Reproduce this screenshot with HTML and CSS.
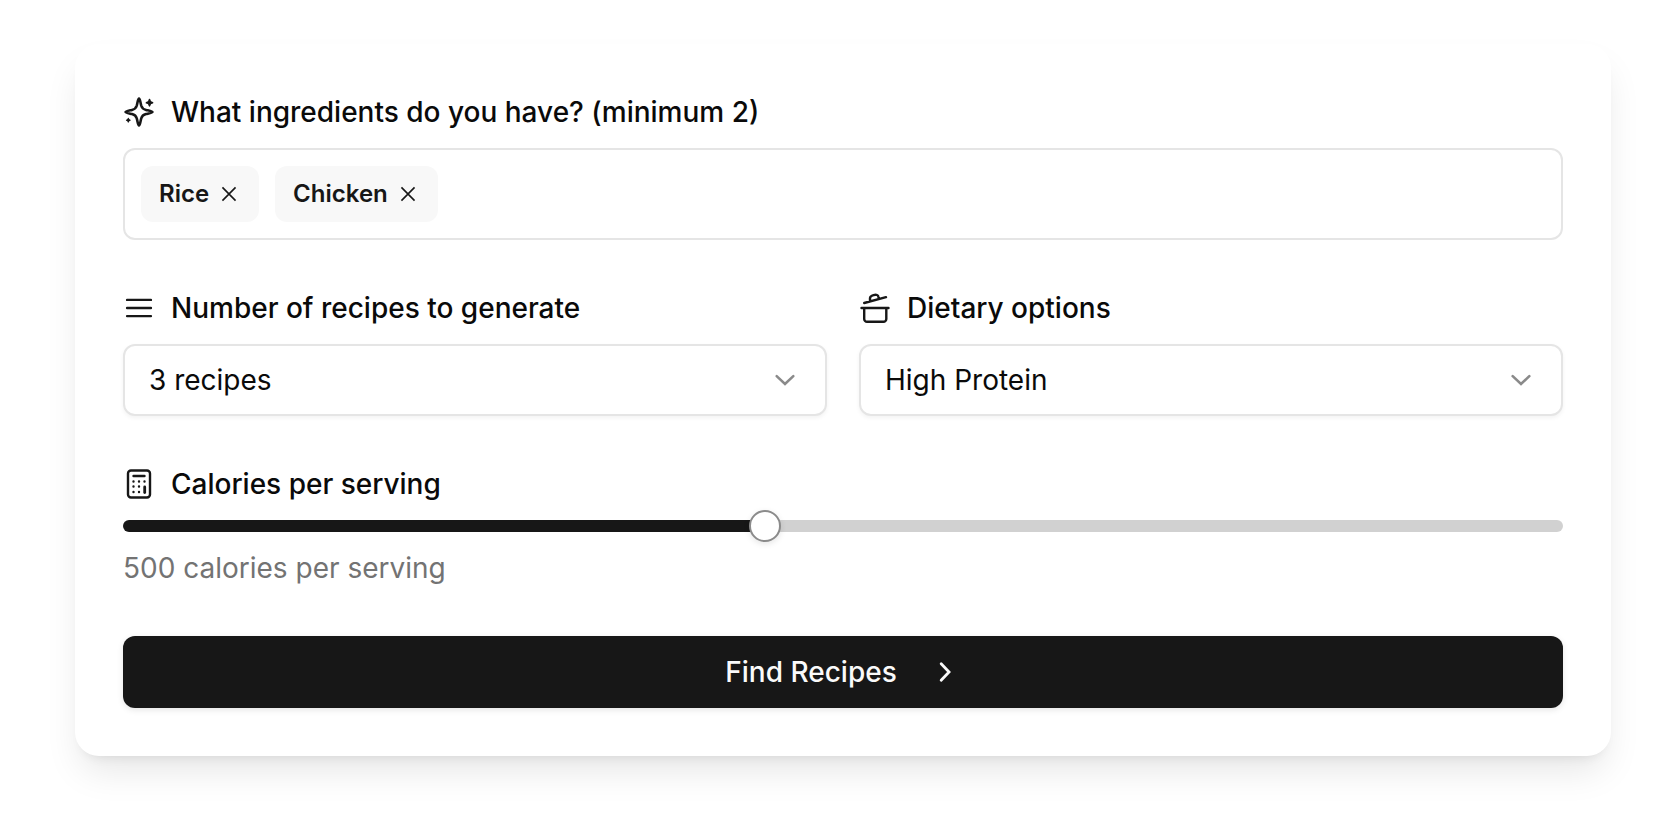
FILE: index.html
```html
<!DOCTYPE html>
<html lang="en">
<head>
    <meta charset="UTF-8">
    <meta name="viewport" content="width=device-width, initial-scale=1.0">
    <title>Recipe Generator</title>
    <link rel="stylesheet" href="styles.css">
</head>
<body>
    <form class="card">
        <div class="field">
            <label for="ingredients">
                <svg class="icon" viewBox="0 0 32 32" fill="none" stroke="currentColor" stroke-width="2.6" stroke-linejoin="round" stroke-linecap="round">
                    <path d="M16 2.5C17 2.500 17.300 6 18.200 9.500C19 12.300 20 13.200 23 13.900C27 14.800 29.500 15.200 29.500 16C29.500 16.800 27 17.200 23 18.100C20 18.800 19 19.700 18.200 22.500C17.300 26 17 29.500 16 29.500C15 29.500 14.700 26 13.800 22.500C13 19.700 12 18.800 9 18.100C5 17.200 2.500 16.800 2.500 16C2.500 15.200 5 14.800 9 13.900C12 13.200 13 12.300 13.800 9.500C14.700 6 15 2.500 16 2.500Z"/>
                    <path d="M26.500 3.600L27.400 5.800L29.600 6.700L27.400 7.600L26.500 9.800L25.600 7.600L23.400 6.700L25.600 5.800Z" fill="currentColor" stroke-width="1.6"/>
                    <path d="M5.300 22.400L5.900 23.600L7.100 24.200L5.900 24.800L5.300 26L4.700 24.800L3.500 24.200L4.700 23.600Z" fill="currentColor" stroke-width="1.2"/>
                </svg>
                What ingredients do you have? (minimum 2)
            </label>
            <div class="tag-box">
                <span class="tag">
                    Rice
                    <button type="button" class="tag-remove" aria-label="Remove Rice">
                        <svg viewBox="0 0 15 15" fill="none" stroke="currentColor"><path d="M3.4 3.4L11.6 11.6M11.6 3.4L3.4 11.6"/></svg>
                    </button>
                </span>
                <span class="tag">
                    Chicken
                    <button type="button" class="tag-remove" aria-label="Remove Chicken">
                        <svg viewBox="0 0 15 15" fill="none" stroke="currentColor"><path d="M3.4 3.4L11.6 11.6M11.6 3.4L3.4 11.6"/></svg>
                    </button>
                </span>
                <input type="text" id="ingredients" class="tag-input">
            </div>
        </div>

        <div class="row">
            <div class="field">
                <label for="count">
                    <svg class="icon" viewBox="0 0 15 15" fill="none" stroke="currentColor" stroke-linecap="round" stroke-width="1.1">
                        <path d="M1.900 3.700H13.100M1.900 7.500H13.100M1.900 11.300H13.100"/>
                    </svg>
                    Number of recipes to generate
                </label>
                <div class="select-wrap">
                    <select id="count">
                        <option>1 recipe</option>
                        <option>2 recipes</option>
                        <option selected>3 recipes</option>
                    </select>
                    <svg class="icon chevron" viewBox="0 0 15 15" fill="none" stroke="currentColor" stroke-linecap="round" stroke-width="1.2"><path d="M3.600 5.700L7.500 9.400L11.400 5.700"/></svg>
                </div>
            </div>
            <div class="field">
                <label for="diet">
                    <svg class="icon" viewBox="0 0 32 32" fill="none" stroke="currentColor" stroke-width="2.4" stroke-linejoin="round" stroke-linecap="round">
                        <path d="M2.500 16H29.500M5.200 16V27A2.800 2.800 0 0 0 8 29.800H24.500A2.800 2.800 0 0 0 27.300 27V16M5.200 11L27 5.200M11 9V6.200C11 4.500 12 3.800 14.500 3.100C17.500 2.300 19.200 3 19.500 5L19.800 6.500"/>
                    </svg>
                    Dietary options
                </label>
                <div class="select-wrap">
                    <select id="diet">
                        <option>None</option>
                        <option selected>High Protein</option>
                        <option>Vegetarian</option>
                    </select>
                    <svg class="icon chevron" viewBox="0 0 15 15" fill="none" stroke="currentColor" stroke-linecap="round" stroke-width="1.2"><path d="M3.600 5.700L7.500 9.400L11.400 5.700"/></svg>
                </div>
            </div>
        </div>

        <div class="field">
            <label for="calories">
                <svg class="icon" viewBox="0 0 32 32" fill="none" stroke="currentColor" stroke-width="2.4" stroke-linecap="round">
                    <rect x="5" y="2.500" width="22" height="27" rx="3"/>
                    <path d="M10.500 8H21.500"/>
                    <path d="M21.700 19V24.500" stroke-width="2.8"/>
                    <path d="M10.500 13.500h.01M16 13.500h.01M21.500 13.500h.01M10.500 18.500h.01M16 18.500h.01M10.500 24h.01M16 24h.01"/>
                </svg>
                Calories per serving
            </label>
            <input type="range" id="calories" class="slider" min="100" max="1000" step="50" value="500">
            <p class="hint">500 calories per serving</p>
        </div>

        <button type="submit" class="submit">
            Find Recipes
            <svg class="icon" viewBox="0 0 15 15" fill="none" stroke="currentColor" stroke-linecap="round" stroke-width="1.3"><path d="M5.700 3.600L9.400 7.500L5.700 11.400"/></svg>
        </button>
    </form>
</body>
</html>
```

FILE: styles.css
```css
* {
    box-sizing: border-box;
}
body {
    font-family: Inter, sans-serif;
    font-size: 28px;
    line-height: 40px;
    color: #0a0a0a;
    background-color: #fff;
    margin: 0;
    padding: 44px 67px 64px 75px;
}
.card {
    display: flex;
    flex-direction: column;
    gap: 48px;
    padding: 48px;
    background-color: #fff;
    border-radius: 24px;
    box-shadow: 0 20px 36px -6px rgba(0, 0, 0, 0.1), 0 8px 12px -8px rgba(0, 0, 0, 0.1);
}
.field {
    display: flex;
    flex-direction: column;
    gap: 16px;
}
label {
    display: flex;
    align-items: center;
    gap: 16px;
    font-weight: 500;
}
.icon {
    width: 32px;
    height: 32px;
    flex-shrink: 0;
    color: #171717;
}
.tag-box {
    display: flex;
    flex-wrap: wrap;
    gap: 16px;
    padding: 16px;
    border: 2px solid #e5e5e5;
    border-radius: 12px;
}
.tag {
    display: flex;
    align-items: center;
    gap: 8px;
    height: 56px;
    padding: 0 18px;
    border-radius: 12px;
    background-color: #f8f8f8;
    color: #171717;
    font-size: 24px;
    font-weight: 600;
}
.tag-remove {
    display: flex;
    padding: 0;
    border: none;
    background: none;
    color: inherit;
    cursor: pointer;
}
.tag-remove svg {
    width: 24px;
    height: 24px;
}
.tag-input {
    flex: 1;
    min-width: 100px;
    border: none;
    outline: none;
    background: none;
    font: inherit;
}
.row {
    display: grid;
    grid-template-columns: 1fr 1fr;
    gap: 32px;
}
.select-wrap {
    position: relative;
}
select {
    appearance: none;
    display: block;
    width: 100%;
    height: 72px;
    padding: 0 72px 0 24px;
    border: 2px solid #e5e5e5;
    border-radius: 12px;
    background-color: #fff;
    box-shadow: 0 2px 4px rgba(0, 0, 0, 0.05);
    color: inherit;
    font: inherit;
}
.chevron {
    position: absolute;
    top: 20px;
    right: 26px;
    opacity: 0.5;
    pointer-events: none;
}
.slider {
    appearance: none;
    width: 100%;
    height: 12px;
    margin: 0;
    border-radius: 6px;
    background: linear-gradient(to right, #171717 45%, #d1d1d1 45%);
}
.slider::-webkit-slider-thumb {
    appearance: none;
    width: 32px;
    height: 32px;
    border: 2px solid #8b8b8b;
    border-radius: 50%;
    background-color: #fff;
    box-shadow: 0 2px 6px rgba(0, 0, 0, 0.1);
}
.hint {
    margin: 0;
    color: #737373;
}
.submit {
    display: flex;
    align-items: center;
    justify-content: center;
    gap: 32px;
    height: 72px;
    border: none;
    border-radius: 12px;
    background-color: #171717;
    box-shadow: 0 2px 6px rgba(0, 0, 0, 0.1);
    color: #fafafa;
    font: inherit;
    font-weight: 500;
    cursor: pointer;
}
.submit .icon {
    color: inherit;
}
```
